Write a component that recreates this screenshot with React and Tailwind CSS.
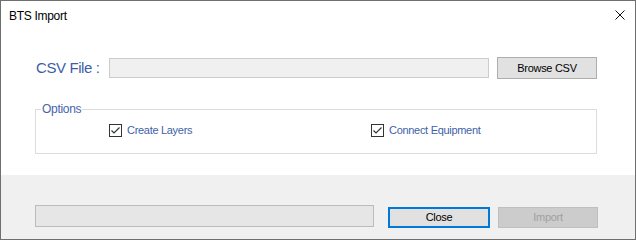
import React from "react";

function CheckBox({ label }) {
  return (
    <div className="flex items-center">
      <div className="w-[13px] h-[13px] border border-[#333333] bg-white flex items-center justify-center">
        <svg width="11" height="11" viewBox="0 0 11 11">
          <path d="M1.5 5.5 L4 8 L9.5 2.5" fill="none" stroke="#333333" strokeWidth="1.2" />
        </svg>
      </div>
      <span className="ml-[5px] text-[11px] tracking-[-0.3px] text-[#3e5fa7]">{label}</span>
    </div>
  );
}

export default function App() {
  return (
    <div className="w-[636px] h-[240px] border border-[#6f6f6f] bg-white flex flex-col font-['Liberation_Sans',sans-serif]">
      {/* title bar */}
      <div className="h-[29px] flex items-center justify-between pl-[8px] pr-[10px]">
        <span className="text-[12px] tracking-[-0.3px] text-black">BTS Import</span>
        <svg width="10" height="10" viewBox="0 0 10 10" className="mt-[-1px]">
          <path d="M0.5 0.5 L9.5 9.5 M9.5 0.5 L0.5 9.5" stroke="#111" strokeWidth="1" />
        </svg>
      </div>

      {/* body */}
      <div className="flex-1 flex flex-col px-[34px]">
        <div className="mt-[27px] flex items-center h-[22px]">
          <span className="w-[74px] pl-[1px] text-[15px] tracking-[-0.4px] text-[#3d5ea6]">CSV File :</span>
          <div className="w-[380px] h-[20px] bg-[#f0f0f0] border border-[#cccccc]"></div>
          <button className="ml-[8px] w-[100px] h-[22px] bg-[#e1e1e1] border border-[#adadad] text-[11px] tracking-[-0.3px] text-black">
            Browse CSV
          </button>
        </div>

        <div className="mt-[30px] relative w-[562px] h-[45px] border border-[#dcdcdc]">
          <span className="absolute left-[5px] top-[-8px] bg-white px-[1px] text-[12px] leading-[14px] tracking-[-0.3px] text-[#4565ad]">
            Options
          </span>
          <div className="flex pt-[12px] pl-[73px]">
            <div className="w-[262px]">
              <CheckBox label="Create Layers" />
            </div>
            <CheckBox label="Connect Equipment" />
          </div>
        </div>
      </div>

      {/* footer */}
      <div className="h-[64px] bg-[#f0f0f0] flex items-start pt-[30px] px-[34px]">
        <div className="w-[339px] h-[22px] bg-[#e6e6e6] border border-[#bcbcbc]"></div>
        <button className="ml-[14px] mt-[2px] w-[102px] h-[21px] bg-[#e1e1e1] border-2 border-[#0078d7] text-[11px] tracking-[-0.3px] text-black">
          Close
        </button>
        <button className="ml-[8px] mt-[2px] w-[100px] h-[21px] bg-[#cccccc] border border-[#bfbfbf] text-[11px] tracking-[-0.3px] text-[#a0a0a0]">
          Import
        </button>
      </div>
    </div>
  );
}
